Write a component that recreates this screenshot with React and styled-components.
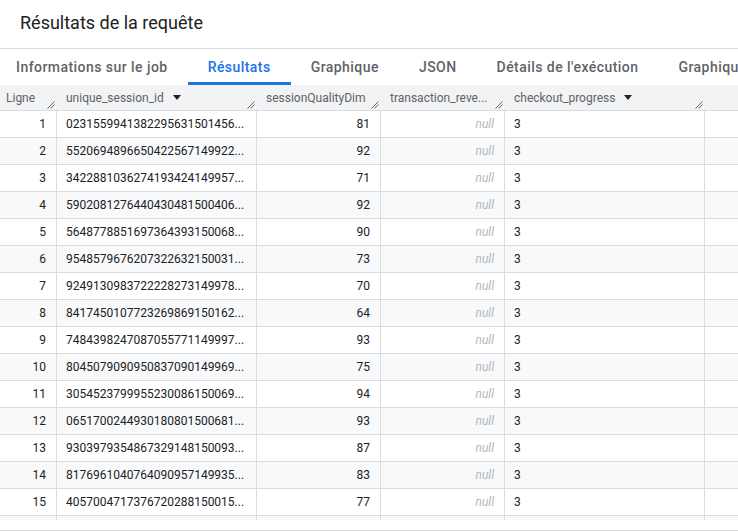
import React from 'react'
import styled, { createGlobalStyle } from 'styled-components'

const GlobalStyle = createGlobalStyle`
  html, body {
    margin: 0;
    padding: 0;
    background: #fff;
    overflow: hidden;
  }

  body {
    font-family: Roboto, 'Noto Sans', Arial, sans-serif;
    color: #202124;
  }
`

const columns = [
  { key: 'row', label: 'Ligne', sort: false, handle: true },
  { key: 'id', label: 'unique_session_id', sort: true, handle: true },
  { key: 'quality', label: 'sessionQualityDim', sort: true, handle: true },
  { key: 'revenue', label: 'transaction_reve...', sort: false, handle: true },
  { key: 'checkout', label: 'checkout_progress', sort: true, handle: true },
  { key: 'blank', label: '', sort: false, handle: false },
]

const rows = [
  ['0231559941382295631501456...', 81],
  ['5520694896650422567149922...', 92],
  ['3422881036274193424149957...', 71],
  ['5902081276440430481500406...', 92],
  ['5648778851697364393150068...', 90],
  ['9548579676207322632150031...', 73],
  ['9249130983722228273149978...', 70],
  ['8417450107723269869150162...', 64],
  ['7484398247087055771149997...', 93],
  ['8045079090950837090149969...', 75],
  ['3054523799955230086150069...', 94],
  ['0651700244930180801500681...', 93],
  ['9303979354867329148150093...', 87],
  ['8176961040764090957149935...', 83],
  ['4057004717376720288150015...', 77],
]

const tabs = [
  'Informations sur le job',
  'Résultats',
  'Graphique',
  'JSON',
  "Détails de l'exécution",
  "Graphique de l'exécution",
]

const SortArrow = () => (
  <svg width="8" height="5" viewBox="0 0 8 5">
    <path d="M0 0 L8 0 L4 5 Z" fill="#202124" />
  </svg>
)

const ResizeHandle = () => (
  <S_Handle width="8" height="8" viewBox="0 0 8 8">
    <path d="M0.5 7.5 L7.5 0.5 M3.5 7.5 L7.5 3.5" stroke="#5f6368" strokeWidth="1" fill="none" />
  </S_Handle>
)

export default function App() {
  const activeTab = 1

  return (
    <S_Page>
      <GlobalStyle />
      <S_TitleBar>
        <S_Title>Résultats de la requête</S_Title>
      </S_TitleBar>

      <S_Tabs>
        {tabs.map((tab, i) => (
          <S_Tab key={tab} isActive={i === activeTab}>
            {tab}
          </S_Tab>
        ))}
      </S_Tabs>

      <S_TableViewport>
        <S_HeaderRow>
          {columns.map((col) => (
            <S_HeaderCell key={col.key}>
              <S_HeaderLabel>{col.label}</S_HeaderLabel>
              {col.sort && <SortArrow />}
              {col.handle && <ResizeHandle />}
            </S_HeaderCell>
          ))}
        </S_HeaderRow>

        {rows.map(([id, quality], i) => (
          <S_Row key={id} isStriped={i % 2 === 1}>
            <S_Cell align="right">{i + 1}</S_Cell>
            <S_Cell>{id}</S_Cell>
            <S_Cell align="right">{quality}</S_Cell>
            <S_Cell align="right" isNull>
              null
            </S_Cell>
            <S_Cell>3</S_Cell>
            <S_Cell />
          </S_Row>
        ))}

        {/* next row, scrolled out of view except for its top edge */}
        <S_Row isStriped>
          {columns.map((col) => (
            <S_Cell key={col.key} />
          ))}
        </S_Row>
      </S_TableViewport>

      <S_Footer />
    </S_Page>
  )
}

const GRID = '57px 200px 124px 124px 200px 1fr'

const S_Page = styled.main`
  display: flex;
  flex-direction: column;
  width: 738px;
  height: 532px;
  overflow: hidden;
`

const S_TitleBar = styled.header`
  display: flex;
  align-items: center;
  height: 48px;
  padding: 0 20px;
  border-bottom: 1px solid #dadce0;
  box-sizing: content-box;
`

const S_Title = styled.h1`
  margin: 0 0 2px;
  font-size: 18px;
  font-weight: 400;
  line-height: 24px;
  color: #202124;
`

const S_Tabs = styled.nav`
  display: flex;
  height: 36px;
  margin-left: -4px;
  white-space: nowrap;
`

const S_Tab = styled.div`
  display: flex;
  align-items: center;
  padding: 3px 20px 0;
  font-size: 14px;
  font-weight: 500;
  letter-spacing: 0.45px;
  color: ${(p) => (p.isActive ? '#1a73e8' : '#5f6368')};
  border-bottom: 3px solid ${(p) => (p.isActive ? '#1a73e8' : 'transparent')};
  cursor: pointer;
`

const S_TableViewport = styled.section`
  display: flex;
  flex-direction: column;
  height: 435px;
  flex-shrink: 0;
  overflow: hidden;
`

const S_HeaderRow = styled.div`
  display: grid;
  grid-template-columns: ${GRID};
  flex-shrink: 0;
  height: 25px;
  background-color: #f1f3f4;
  border-bottom: 1px solid #dadce0;
`

const S_HeaderCell = styled.div`
  position: relative;
  display: flex;
  align-items: center;
  gap: 9px;
  padding: 0 6px 0 9px;
  overflow: hidden;
  white-space: nowrap;

  &:first-child {
    padding-left: 6px;
  }
`

const S_HeaderLabel = styled.span`
  font-size: 12px;
  color: #5f6368;
`

const S_Handle = styled.svg`
  position: absolute;
  right: 2px;
  bottom: 1px;
`

const S_Row = styled.div`
  display: grid;
  grid-template-columns: ${GRID};
  flex-shrink: 0;
  height: 26px;
  background-color: ${(p) => (p.isStriped ? '#f8f9fa' : '#fff')};
  border-bottom: 1px solid #dadce0;
`

const S_Cell = styled.div`
  display: flex;
  align-items: center;
  justify-content: ${(p) => (p.align === 'right' ? 'flex-end' : 'flex-start')};
  padding: 0 10px 0 9px;
  border-right: 1px solid #dadce0;
  overflow: hidden;
  white-space: nowrap;
  font-size: 12px;
  font-style: ${(p) => (p.isNull ? 'italic' : 'normal')};
  color: ${(p) => (p.isNull ? '#b4b8bd' : '#202124')};

  &:last-child {
    border-right: none;
  }
`

const S_Footer = styled.footer`
  margin-top: 10px;
  border-top: 1px solid #dadce0;
`
